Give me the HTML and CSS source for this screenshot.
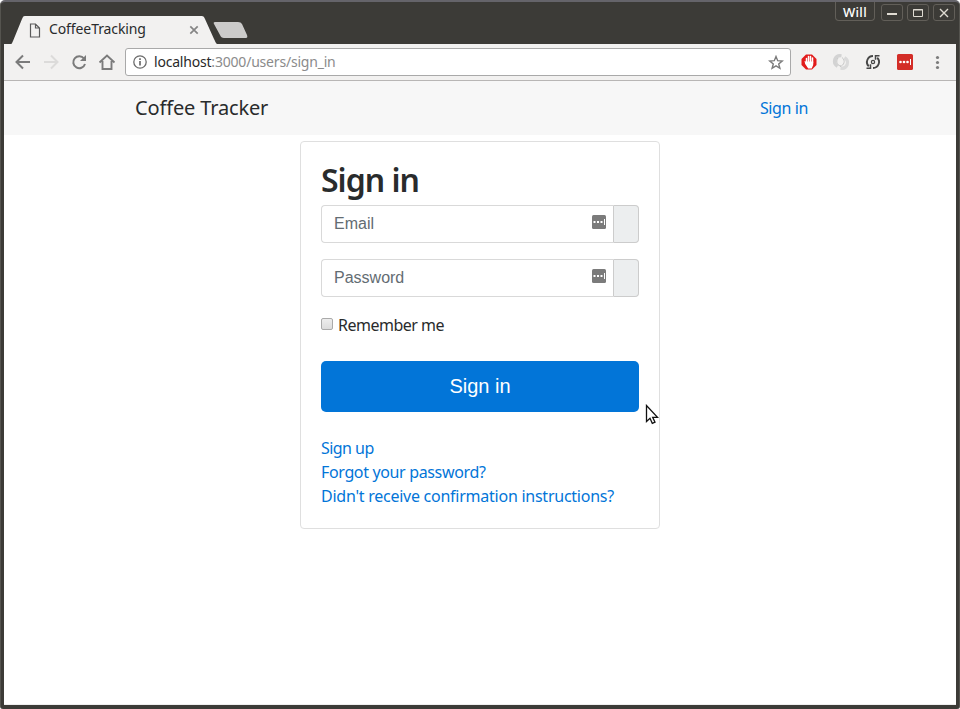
FILE: index.html
```html
<!DOCTYPE html>
<html lang="en">
<head>
<meta charset="utf-8">
<title>CoffeeTracking</title>
<link rel="stylesheet" href="styles.css">
</head>
<body>
<div class="window">
  <header class="titlebar">
    <div class="tab">
      <svg class="tab-shape" width="238" height="28" viewBox="0 0 238 28"><path d="M0 28c1 0 1-1 2-3l9-22c1-2 1-3 3-3h176c3 0 3 1 4 3l9 20c2 4 2 5 4 5z" fill="#f2f1f0"/><path d="M203 8q-1-2 1-2h23q3 0 4 2l5 11q1 3-1 3h-22q-3 0-4-3z" fill="#cccbca"/></svg>
      <svg class="page-icon" width="12" height="15" viewBox="0 0 12 15" fill="none" stroke="#5a5a5a" stroke-width="1.2"><path d="M1.5 1h5l4 4v9h-9zM6.5 1v4h4"/></svg>
      <span class="tab-title">CoffeeTracking</span>
      <svg class="tab-close" width="10" height="10" viewBox="0 0 10 10" stroke="#858585" stroke-width="1.7"><path d="M1.3 1.3l7.4 7.4M8.7 1.3L1.3 8.7"/></svg>
    </div>
    <div class="controls">
      <span class="user">Will</span>
      <span class="control"><svg width="22" height="16" viewBox="0 0 22 16"><path d="M6 9h10" stroke="#dfdbd2" stroke-width="2"/></svg></span>
      <span class="control"><svg width="22" height="16" viewBox="0 0 22 16" fill="none" stroke="#dfdbd2"><path d="M6.500 4.500h9v7h-9zM6 5h10"/></svg></span>
      <span class="control"><svg width="22" height="16" viewBox="0 0 22 16" stroke="#dfdbd2" stroke-width="1.4"><path d="M7 4l8 8M15 4l-8 8"/></svg></span>
    </div>
  </header>
  <div class="browser">
    <div class="toolbar">
      <svg class="nav-icons" width="115" height="36" viewBox="4 44 115 36" fill="none" stroke-width="2">
        <path d="M30 62H17M23 55.5L16.500 62l6.500 6.500" stroke="#7b7b7b"/>
        <path d="M44 62h13M51 55.500l6.500 6.500-6.500 6.500" stroke="#dcdbda"/>
        <path d="M84 58.500A6 6 0 1 0 85 64" stroke="#7b7b7b"/><path d="M86 55v6h-6z" fill="#7b7b7b"/>
        <path d="M99.500 62.500l7.500-7 7.500 7M102.500 61v8h9v-8" stroke="#7b7b7b" stroke-width="1.900"/>
      </svg>
      <div class="address">
        <svg width="14" height="14" viewBox="0 0 14 14" fill="none" stroke="#6b6b6b"><circle cx="7" cy="7" r="6.200" stroke-width="1.300"/><path d="M7 6v4.500M7 3.300v1.700" stroke-width="1.700"/></svg>
        <span class="url"><b>localhost</b>:3000/users/sign_in</span>
        <svg class="star" width="16" height="15" viewBox="0 0 16 15" fill="none" stroke="#7b7b7b" stroke-width="1.400"><path d="M8 1.500l1.700 4.200 4.500.3-3.500 2.900 1.200 4.400L8 10.900l-3.900 2.400 1.200-4.400L1.800 6l4.500-.3z"/></svg>
      </div>
      <svg class="extensions" width="165" height="36" viewBox="791 44 165 36">
        <path d="M806 54.500h6l4.500 4.500v6l-4.500 4.500h-6l-4.500-4.500v-6z" fill="#e21b1b"/>
        <path d="M806.500 63v-4.500M808.500 62v-5.500M810.500 62v-5.500M812.500 63v-5" stroke="#fff" stroke-width="1.500" stroke-linecap="round"/><path d="M804.500 61l1.500.5h7.200v3.500l-1.500 3.500h-3.500l-3-4.500z" fill="#fff"/>
        <g fill="none"><path d="M841.500 55.800c-7-1-9.500 7-4 10.500" stroke="#d3d3d3" stroke-width="3.200"/><path d="M840.500 68.200c7 1 9.500-7 4-10.500" stroke="#dadada" stroke-width="3.200"/><path d="M842 57.500c4 3 2 8-2 9M838 58c-3 4 0 8 3 8" stroke="#bdbdbd" stroke-width=".8"/></g>
        <g fill="none" stroke="#474747" stroke-width="1.900"><path d="M873 56a6 6 0 0 0-4.200 10.300M873 68a6 6 0 0 0 4.200-10.300"/><circle cx="873" cy="62" r="1.600" stroke-width="1.300"/><path d="M866.500 68.200h4v-4M879.500 55.800h-4v4" stroke-width="1.500"/></g>
        <rect x="897" y="54" width="16" height="16" rx="1.500" fill="#d32d27"/><g fill="#fff"><circle cx="900.500" cy="62" r="1.300"/><circle cx="904" cy="62" r="1.300"/><circle cx="907.500" cy="62" r="1.300"/><path d="M910 59h1v6h-1z"/></g>
        <g fill="#7b7b7b"><circle cx="937.500" cy="57.500" r="1.600"/><circle cx="937.500" cy="62.500" r="1.600"/><circle cx="937.500" cy="67.500" r="1.600"/></g>
      </svg>
    </div>
    <nav class="navbar"><a class="brand">Coffee Tracker</a><a class="nav-link">Sign in</a></nav>
    <main class="card">
      <h1>Sign in</h1>
      <div class="field"><span class="input">Email<svg width="14" height="14" viewBox="0 0 14 14"><rect width="14" height="14" rx="1.500" fill="#7b7b7b"/><path d="M1.500 6h2v2h-2zM5 6h2v2H5zM8.500 6h2v2h-2zM12 4h1v6h-1z" fill="#fff"/></svg></span><span class="addon"></span></div>
      <div class="field"><span class="input">Password<svg width="14" height="14" viewBox="0 0 14 14"><rect width="14" height="14" rx="1.500" fill="#7b7b7b"/><path d="M1.500 6h2v2h-2zM5 6h2v2H5zM8.500 6h2v2h-2zM12 4h1v6h-1z" fill="#fff"/></svg></span><span class="addon"></span></div>
      <label class="remember"><span class="checkbox"></span><span class="remember-text">Remember me</span></label>
      <div class="submit">Sign in</div>
      <div class="links"><a class="signup">Sign up</a><a class="forgot">Forgot your password?</a><a class="confirm">Didn't receive confirmation instructions?</a></div>
    </main>
  </div>
  <svg class="cursor" width="14" height="21" viewBox="0 0 14 21"><path d="M1.500 1.500v16l3.500-3.200 2.300 5 2.700-1.200-2.300-4.800h4.800z" fill="#fff" stroke="#111" stroke-width="1.300"/></svg>
</div>
</body>
</html>
```

FILE: styles.css
```css
* { box-sizing: border-box; }
body { margin: 0; background: #fff; font-family: "Noto Sans", "Open Sans", sans-serif; font-size: 16px; color: #292b2c; }
svg { display: block; flex: none; }
.window { position: relative; height: 709px; background: #3c3b37; border-radius: 5px 5px 3px 3px; border: 1px solid #55544f; border-top: 2px solid #65646a; border-bottom: 0; padding: 0 3px 4px; overflow: hidden; display: flex; flex-direction: column; }
.titlebar { height: 42px; flex: none; display: flex; justify-content: space-between; }
.tab { position: relative; width: 238px; height: 28px; margin: 14px 0 0 7px; display: flex; align-items: center; padding-left: 18px; }
.tab-shape { position: absolute; left: 0; top: 0; }
.page-icon, .tab-title, .tab-close { position: relative; }
.tab-title { margin-left: 8px; width: 140px; font-size: 14px; letter-spacing: -0.1px; white-space: nowrap; line-height: 20px; top: -1px; }
.controls { display: flex; gap: 4px; padding-right: 1px; }
.user { width: 40px; height: 19px; margin-right: 2px; border: 1px solid #625f59; border-top: 0; border-radius: 0 0 4px 4px; color: #fff; font-size: 13px; font-weight: 500; letter-spacing: 0.3px; line-height: 20px; text-align: center; }
.control { width: 22px; height: 17px; margin-top: 2px; border: 1px solid #625f59; border-radius: 3px; display: flex; justify-content: center; align-items: center; }
.browser { flex: 1; min-height: 0; background: #fff; border-bottom: 1px solid #eee; }
.toolbar { height: 37px; background: #f2f1f0; border-bottom: 1px solid #b8b6b5; display: flex; }
.nav-icons { margin-right: 6px; }
.address { width: 666px; height: 28px; margin-top: 4px; background: #fff; border: 1px solid #a9a9a9; border-radius: 3px; display: flex; align-items: center; padding: 0 6px 0 7px; }
.url { flex: 1; margin-left: 7px; font-size: 14px; color: #8b8b8b; letter-spacing: -0.2px; line-height: 20px; }
.url b { color: #292929; font-weight: 400; }
.navbar { height: 54px; background: #f7f7f7; display: flex; align-items: center; justify-content: space-between; padding: 0 148px 0 131px; }
.brand { font-size: 20px; letter-spacing: -0.15px; margin-top: -2px; }
.nav-link, .links { color: #0275d8; }
.nav-link { letter-spacing: -0.4px; }
.card { width: 360px; height: 388px; margin: 6px auto 0; border: 1px solid #dfdfdf; border-radius: 4px; padding: 20px; }
h1 { margin: 0 0 8px; font-size: 32px; font-weight: 600; line-height: 35px; letter-spacing: -1px; white-space: nowrap; }
.field { display: flex; height: 38px; margin-bottom: 16px; }
.input { width: 293px; border: 1px solid #d9d9d9; border-right: 1px solid #ccc; border-radius: 4px 0 0 4px; display: flex; align-items: center; justify-content: space-between; padding: 0 7px 0 12px; font-family: "Liberation Sans", sans-serif; color: #636c72; }
.input svg { margin-top: -4px; }
.addon { width: 25px; background: #eceeef; border: 1px solid #ccc; border-left: 0; border-radius: 0 4px 4px 0; }
.remember { display: flex; height: 24px; align-items: center; }
.checkbox { width: 12px; height: 12px; margin: -2px 5px 0 0; border: 1px solid #aaa; border-radius: 2px; background: linear-gradient(#ededed, #dcdcdc); }
.remember-text { letter-spacing: -0.5px; }
.submit { height: 51px; margin-top: 24px; border-radius: 5px; background: #0275d8; color: #fff; font: 20px/50px "Liberation Sans", sans-serif; text-align: center; }
.links { margin-top: 24px; display: flex; flex-direction: column; align-items: flex-start; line-height: 24px; white-space: nowrap; }
.signup { letter-spacing: -0.55px; }
.forgot { letter-spacing: -0.35px; }
.confirm { letter-spacing: -0.25px; }
.cursor { position: absolute; left: 644px; top: 402px; }
```
